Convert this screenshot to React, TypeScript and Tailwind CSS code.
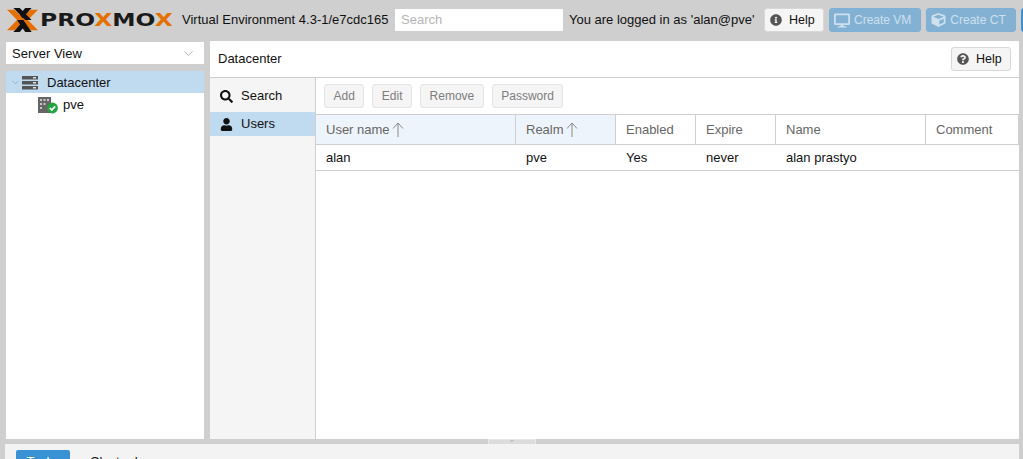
import { ChevronDown } from "lucide-react";
import { FaCube, FaDesktop, FaInfoCircle, FaQuestionCircle, FaSearch, FaUser } from "react-icons/fa";

function Logo() {
  return (
    <div className="ml-[7px] flex w-[168px] shrink-0 items-center">
      <svg width="31" height="24" viewBox="0 0 34 26" preserveAspectRatio="none" className="shrink-0">
        <polygon points="0,2 8,2 20,13 8,24 0,24 11,13" fill="#e57000" />
        <polygon points="34,2 26,2 14,13 26,24 34,24 23,13" fill="#e57000" />
        <polygon points="7,0 14,0 27,13 20,13" fill="#111" />
        <polygon points="27,0 20,0 14,7 17,11" fill="#111" />
        <polygon points="7,26 14,26 20,19 17,15" fill="#111" />
        <polygon points="27,26 20,26 11,13 18,13" fill="#111" />
      </svg>
      <span className="ml-[2px] origin-left scale-x-[1.3] text-[18px] leading-none font-bold whitespace-nowrap text-[#1a1a1a] [font-family:'DejaVu_Sans',sans-serif]">
        PRO<span className="text-[#e57000]">X</span>MO<span className="text-[#e57000]">X</span>
      </span>
    </div>
  );
}

function ToolButton({ label }: { label: string }) {
  return (
    <div className="flex h-6 items-center rounded-[3px] border border-[#e3e3e3] bg-[#f5f5f5] px-[8.5px] text-xs text-[#7d7d7d]">
      {label}
    </div>
  );
}

function HelpButton({ info }: { info?: boolean }) {
  return (
    <div className="flex h-6 w-[60px] shrink-0 items-center gap-[7px] rounded-[3px] border border-[#d8d8d8] bg-[#f5f5f5] pl-[5px] text-[12.5px] text-[#111]">
      {info ? <FaInfoCircle className="h-[12px] w-[12px] text-[#555]" /> : <FaQuestionCircle className="h-[12px] w-[12px] text-[#555]" />}
      Help
    </div>
  );
}

function CreateButton({ label, vm }: { label: string; vm?: boolean }) {
  return (
    <div className="flex h-6 shrink-0 items-center rounded-[3px] border border-[#7fb0d6] bg-[#82b1d4] pr-[9px] pl-[4px] text-xs text-[#cfe0ee]">
      {vm ? <FaDesktop className="mr-[4px] h-[15px] w-[16px]" /> : <FaCube className="mr-[4px] h-[14px] w-[15px]" />}
      {label}
    </div>
  );
}

function SortArrow() {
  return (
    <svg width="12" height="16" viewBox="0 0 12 16" className="shrink-0" fill="none" stroke="#888" strokeWidth="1">
      <path d="M6 1V15M1 6.5L6 1L11 6.5" />
    </svg>
  );
}

function ColumnHead({ label, width, sorted, grow }: { label: string; width?: string; sorted?: boolean; grow?: boolean }) {
  return (
    <div
      className={`flex h-full items-center gap-[2px] border-r border-[#cfcfcf] pl-[10px] text-[#666] ${sorted ? "bg-[#eef4fb]" : "bg-white"} ${grow ? "flex-1" : "shrink-0"} ${width ?? ""}`}
    >
      {label}
      {sorted && <SortArrow />}
    </div>
  );
}

function Cell({ text, width }: { text: string; width: string }) {
  return <div className={`shrink-0 pl-[10px] text-[#111] ${width}`}>{text}</div>;
}

export default function App() {
  return (
    <div className="flex h-[459px] w-[1023px] flex-col overflow-hidden bg-[#cfcfcf] text-[13px] [font-family:'Liberation_Sans',Arial,sans-serif]">
      <header className="flex h-[41px] shrink-0 items-center pb-px whitespace-nowrap">
        <Logo />
        <span className="ml-[7px] w-[213px] shrink-0 text-[#111]">Virtual Environment 4.3-1/e7cdc165</span>
        <div className="flex h-[22px] w-[168px] shrink-0 items-center bg-white pl-[6px] text-[#b5b5b5]">Search</div>
        <span className="ml-[6px] w-[195px] shrink-0 text-[#111]">You are logged in as 'alan@pve'</span>
        <div className="flex gap-[5px]">
          <HelpButton info />
          <CreateButton label="Create VM" vm />
          <CreateButton label="Create CT" />
          <div className="h-6 w-[30px] shrink-0 rounded-[3px] bg-[#3892d4]" />
        </div>
      </header>

      <main className="flex h-[398px] shrink-0">
        <aside className="ml-[6px] flex w-[198px] shrink-0 flex-col gap-[7px] pt-px">
          <div className="flex h-[22px] items-center justify-between bg-white pt-px pr-[8px] pl-[6px] text-[#111]">
            Server View
            <ChevronDown className="h-[15px] w-[15px] text-[#999]" strokeWidth={1.25} />
          </div>
          <div className="flex-1 bg-white">
            <div className="flex h-[22px] items-center bg-[#c0daf0] pt-px text-[#111]">
              <ChevronDown className="ml-[4px] h-[11px] w-[11px] shrink-0 text-[#8aa0b2]" strokeWidth={1.5} />
              <svg width="17" height="14" viewBox="0 0 17 14" className="ml-px shrink-0">
                <rect x="0" y="0" width="16" height="3.5" fill="#555" />
                <rect x="0" y="5" width="16" height="3.5" fill="#555" />
                <rect x="0" y="10" width="16" height="3.5" fill="#555" />
                <rect x="11" y="1" width="3" height="1.5" fill="#ddd" />
                <rect x="11" y="6" width="3" height="1.5" fill="#ddd" />
                <rect x="11" y="11" width="3" height="1.5" fill="#ddd" />
              </svg>
              <span className="ml-[8px]">Datacenter</span>
            </div>
            <div className="flex h-[22px] items-center text-[#111]">
              <svg width="20" height="17" viewBox="0 0 20 17" className="mt-[2px] ml-[32px] shrink-0">
                <rect x="0" y="0" width="13" height="16" fill="#666" />
                <rect x="2" y="2" width="2" height="2" fill="#c5c5c5" />
                <rect x="5.5" y="2" width="2" height="2" fill="#c5c5c5" />
                <rect x="9" y="2" width="2" height="2" fill="#c5c5c5" />
                <rect x="2" y="6" width="2" height="2" fill="#c5c5c5" />
                <rect x="5.5" y="6" width="2" height="2" fill="#c5c5c5" />
                <rect x="2" y="10" width="2" height="2" fill="#c5c5c5" />
                <circle cx="14.5" cy="11" r="5.4" fill="#21a33d" />
                <path d="M11.8 11 L13.8 13 L17.2 9.4" fill="none" stroke="#fff" strokeWidth="1.7" />
              </svg>
              <span className="ml-[5px] pt-px">pve</span>
            </div>
          </div>
        </aside>

        <section className="ml-[6px] flex w-[809px] shrink-0 flex-col bg-white">
          <div className="flex h-[37px] shrink-0 items-center justify-between border-b border-[#cfcfcf] px-2 text-[#111]">
            Datacenter
            <HelpButton />
          </div>
          <div className="flex flex-1">
            <nav className="w-[106px] shrink-0 border-r border-[#cfcfcf] bg-[#f5f5f5] pt-[6px] text-[#111]">
              <div className="flex h-[24px] items-center gap-2 pl-[10px]">
                <FaSearch className="h-[13px] w-[13px] shrink-0" />
                Search
              </div>
              <div className="mt-[4px] flex h-[24px] items-center gap-2 bg-[#c0daf0] pl-[10px]">
                <FaUser className="h-[13px] w-[13px] shrink-0" />
                Users
              </div>
            </nav>
            <div className="flex min-w-0 flex-1 flex-col">
              <div className="flex h-[37px] shrink-0 items-center gap-2 border-b border-[#cfcfcf] pb-px pl-2">
                <ToolButton label="Add" />
                <ToolButton label="Edit" />
                <ToolButton label="Remove" />
                <ToolButton label="Password" />
              </div>
              <div className="flex h-[30px] shrink-0 items-center border-b border-[#cfcfcf]">
                <ColumnHead label="User name" width="w-[200px]" sorted />
                <ColumnHead label="Realm" width="w-[100px]" sorted />
                <ColumnHead label="Enabled" width="w-[80px]" />
                <ColumnHead label="Expire" width="w-[80px]" />
                <ColumnHead label="Name" width="w-[150px]" />
                <ColumnHead label="Comment" grow />
              </div>
              <div className="flex h-[26px] shrink-0 items-center border-b border-[#cfcfcf] pt-px">
                <Cell text="alan" width="w-[200px]" />
                <Cell text="pve" width="w-[100px]" />
                <Cell text="Yes" width="w-[80px]" />
                <Cell text="never" width="w-[80px]" />
                <Cell text="alan prastyo" width="w-[150px]" />
              </div>
            </div>
          </div>
        </section>
      </main>

      <div className="flex h-[5px] shrink-0 justify-center">
        <div className="ml-px flex h-[5px] w-[48px] justify-center overflow-hidden border-x border-t border-[#e8e8e8] bg-[#dcdcdc]">
          <ChevronDown className="-mt-[6px] h-[12px] w-[14px] text-[#aaa]" strokeWidth={2} />
        </div>
      </div>

      <footer className="mr-[4px] ml-[5px] flex flex-1 items-start gap-[20px] bg-[#f3f3f3] pt-[6px] pl-[11px] text-[#111]">
        <div className="flex h-[24px] w-[54px] items-center justify-center rounded-t-[2px] bg-[#3892d4] text-white">Tasks</div>
        <span className="mt-[2px]">Cluster log</span>
      </footer>
    </div>
  );
}
